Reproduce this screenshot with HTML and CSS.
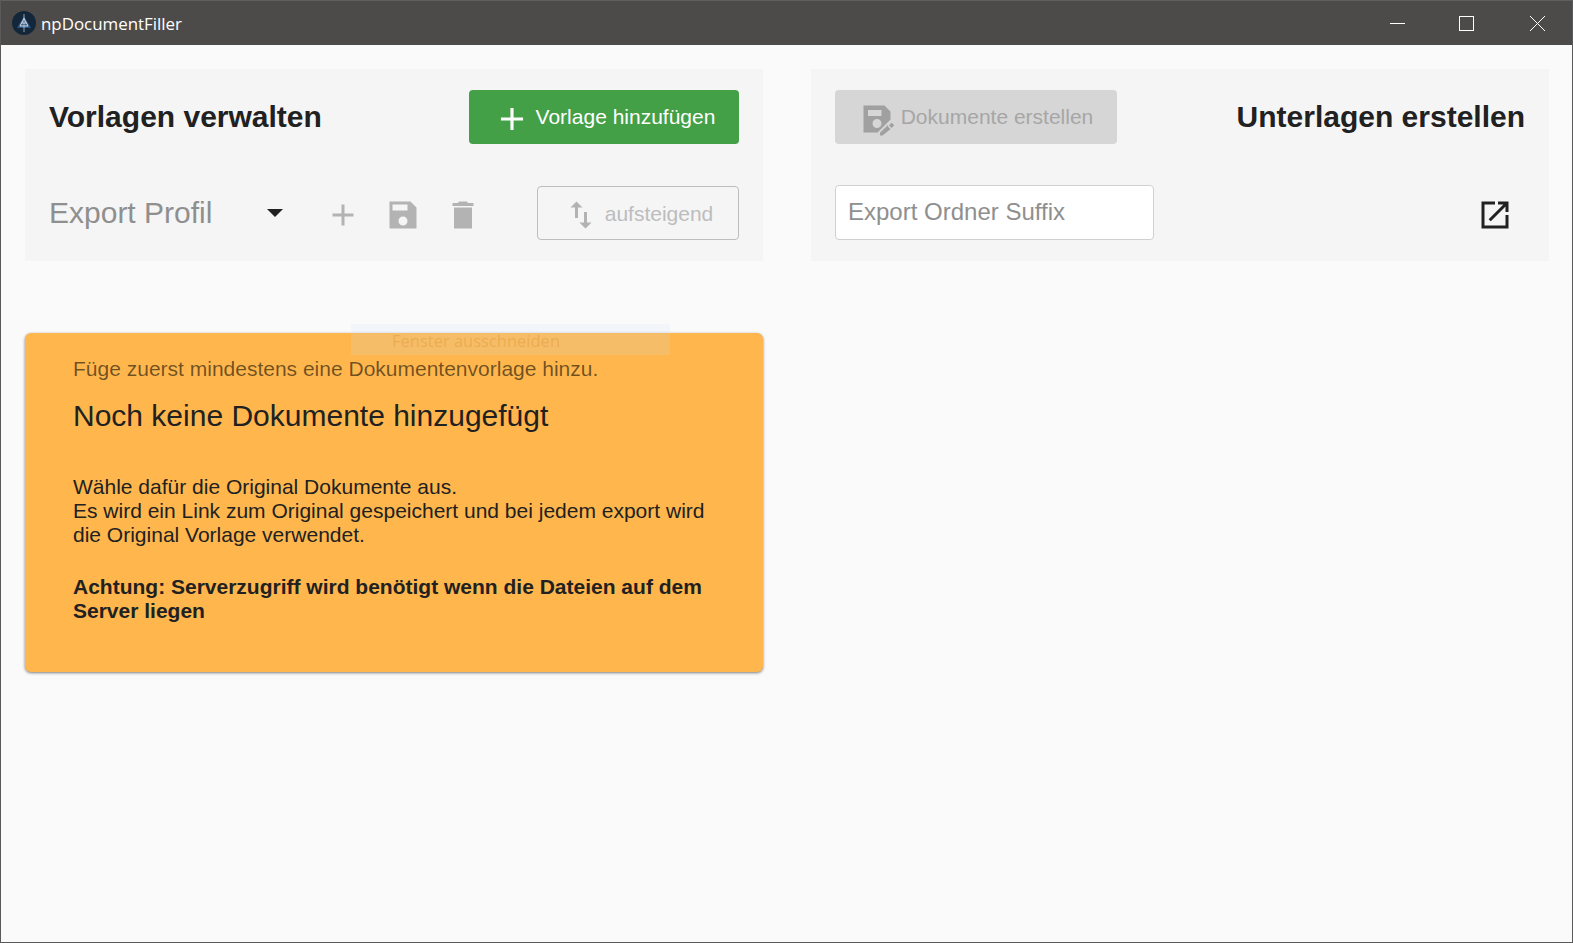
FILE: index.html
```html
<!DOCTYPE html>
<html lang="de">
<head>
    <meta charset="UTF-8">
    <title>npDocumentFiller</title>
    <link rel="stylesheet" href="styles.css">
</head>
<body>
    <div class="window">
        <header class="titlebar">
            <svg class="logo" viewBox="0 0 24 24">
                <circle cx="12" cy="12" r="12" fill="#14263a"/>
                <path d="M12 5 L19 17 L5 17 Z" fill="#2a5585"/>
                <path d="M12 7.5 L16 15 L8 15 Z M9.5 12 H14.5" fill="none" stroke="#dcdcdc" stroke-width="1"/>
                <path d="M12 3 V21" stroke="#c9d2da" stroke-width="0.7"/>
            </svg>
            <span class="app-name">npDocumentFiller</span>
            <div class="window-controls">
                <div class="control control-min">
                    <svg width="15" height="15" viewBox="0 0 15 15"><path d="M0 7.5 H15" stroke="#fff"/></svg>
                </div>
                <div class="control control-max">
                    <svg width="15" height="15" viewBox="0 0 15 15"><rect x="0.5" y="0.5" width="14" height="14" fill="none" stroke="#fff"/></svg>
                </div>
                <div class="control">
                    <svg width="15" height="15" viewBox="0 0 15 15"><path d="M0 0 L15 15 M15 0 L0 15" stroke="#fff"/></svg>
                </div>
            </div>
        </header>

        <main class="content">
            <section class="column">
                <div class="panel">
                    <div class="panel-row">
                        <h2 class="panel-title">Vorlagen verwalten</h2>
                        <button class="btn btn-green">
                            <svg class="btn-plus" viewBox="0 0 24 24"><path d="M19 13h-6v6h-2v-6H5v-2h6V5h2v6h6v2z"/></svg>
                            Vorlage hinzufügen
                        </button>
                    </div>
                    <div class="panel-row panel-row-second">
                        <div class="select">
                            <span class="select-label">Export Profil</span>
                            <span class="select-caret"></span>
                        </div>
                        <div class="icon-group">
                            <svg class="icon" viewBox="0 0 24 24"><path d="M19 13h-6v6h-2v-6H5v-2h6V5h2v6h6v2z"/></svg>
                            <svg class="icon" viewBox="0 0 24 24"><path d="M17 3H3v18h18V7l-4-4zm-5 16c-1.66 0-3-1.34-3-3s1.34-3 3-3 3 1.34 3 3-1.34 3-3 3zm3-10H5V5h10v4z"/></svg>
                            <svg class="icon" viewBox="0 0 24 24"><path d="M6 21h12V7H6v14zM19 4h-3.5l-1-1h-5l-1 1H5v2h14V4z"/></svg>
                        </div>
                        <button class="btn btn-outline">
                            <svg class="icon" viewBox="0 0 24 24"><path d="M16 17.01V10h-2v7.01h-3L15 21l4-3.99h-3zM9 3L5 6.99h3V14h2V6.99h3L9 3z"/></svg>
                            aufsteigend
                        </button>
                    </div>
                </div>

                <div class="card">
                    <p class="card-hint">Füge zuerst mindestens eine Dokumentenvorlage hinzu.</p>
                    <h3 class="card-title">Noch keine Dokumente hinzugefügt</h3>
                    <p class="card-text">Wähle dafür die Original Dokumente aus.<br>Es wird ein Link zum Original gespeichert und bei jedem export wird die Original Vorlage verwendet.</p>
                    <p class="card-text card-warning">Achtung: Serverzugriff wird benötigt wenn die Dateien auf dem Server liegen</p>
                </div>
            </section>

            <section class="column">
                <div class="panel">
                    <div class="panel-row">
                        <button class="btn btn-disabled">
                            <svg class="icon" viewBox="0 0 24 24"><path d="M21 12.4V7l-4-4H3v18h9.4l8.6-8.6zM15 15c0 1.66-1.34 3-3 3s-3-1.34-3-3 1.34-3 3-3 3 1.34 3 3zM6 6h9v4H6V6zm13.99 10.25 1.77-1.77 1.76 1.76-1.77 1.77-1.76-1.76zm-.71.71 1.76 1.76L15.76 23H14v-1.76l5.28-5.28z"/></svg>
                            Dokumente erstellen
                        </button>
                        <h2 class="panel-title">Unterlagen erstellen</h2>
                    </div>
                    <div class="panel-row panel-row-second">
                        <input class="suffix-input" type="text" placeholder="Export Ordner Suffix">
                        <svg class="icon icon-open" viewBox="0 0 24 24"><path d="M19 19H5V5h7V3H3v18h18v-9h-2v7zM14 3v2h3.59l-9.83 9.83 1.41 1.41L19 6.41V10h2V3h-7z"/></svg>
                    </div>
                </div>
            </section>
        </main>

        <!-- snipping tool hint, fading out over the window -->
        <div class="snip-hint">Fenster ausschneiden</div>
    </div>
</body>
</html>
```

FILE: styles.css
```css
* {
    box-sizing: border-box;
}

body {
    margin: 0;
    font-family: 'Liberation Sans', Arial, sans-serif;
    color: #212121;
    background-color: #fafafa;
}

.window {
    position: relative;
    height: 100vh;
    border: 1px solid #5a5a5a;
    border-top: 0;
    overflow: hidden;
}

.titlebar {
    display: flex;
    align-items: center;
    height: 45px;
    padding-left: 11px;
    background-color: #4d4b49;
    border-top: 1px solid #5f5f5f;
    color: #fff;
}

.logo {
    width: 24px;
    height: 24px;
}

.app-name {
    margin-left: 5px;
    font-family: 'Open Sans', 'Noto Sans', sans-serif;
    font-size: 16.9px;
}

.window-controls {
    display: flex;
    margin-left: auto;
    margin-right: -1px;
}

.control {
    display: flex;
    align-items: center;
    width: 70px;
    height: 44px;
    padding-left: 27px;
}

.control-min {
    width: 69px;
}

.control-max {
    width: 71px;
}

.content {
    display: grid;
    grid-template-columns: 738px 738px;
    column-gap: 48px;
    padding: 24px;
}

.panel {
    background-color: #f5f5f5;
    padding: 21px 24px;
    height: 192px;
}

.panel-row {
    display: flex;
    align-items: center;
    justify-content: space-between;
    height: 54px;
}

.panel-row-second {
    margin-top: 42px;
}

.panel-title {
    margin: 0;
    font-size: 30px;
    font-weight: 700;
}

.btn {
    display: flex;
    align-items: center;
    justify-content: center;
    height: 54px;
    border: 0;
    border-radius: 4px;
    font-family: inherit;
    font-size: 21px;
}

.btn-green {
    width: 270px;
    gap: 5px;
    background-color: #43a047;
    color: #fff;
}

.btn-plus {
    width: 38px;
    height: 38px;
    fill: #fff;
    margin-top: 4px;
}

.btn-disabled {
    width: 282px;
    gap: 6px;
    background-color: #d6d6d6;
    color: #a6a6a6;
}

.btn-disabled .icon {
    fill: #a0a0a0;
    margin-top: 4px;
}

.btn-outline {
    width: 202px;
    gap: 6px;
    padding-top: 2px;
    background: transparent;
    border: 1px solid #bdbdbd;
    color: #bdbdbd;
}

.btn-outline .icon {
    margin-top: 2px;
}

.icon {
    width: 36px;
    height: 36px;
    fill: #b3b3b3;
    flex-shrink: 0;
}

.select {
    display: flex;
    align-items: center;
    justify-content: space-between;
    width: 234px;
}

.select-label {
    font-size: 30px;
    color: #8f8f8f;
}

.select-caret {
    width: 0;
    height: 0;
    border-left: 8px solid transparent;
    border-right: 8px solid transparent;
    border-top: 8px solid #212121;
}

.icon-group {
    display: flex;
    gap: 24px;
    margin-left: 42px;
    margin-right: auto;
    margin-top: 4px;
}

.suffix-input {
    width: 319px;
    height: 55px;
    margin-top: -1px;
    padding: 0 12px 2px;
    border: 1px solid #d0d0d0;
    border-radius: 4px;
    background-color: #fff;
    font-family: inherit;
    font-size: 24px;
}

.suffix-input::placeholder {
    color: #8f8f8f;
}

.icon-open {
    fill: #212121;
    margin-right: 12px;
    margin-top: 4px;
}

.card {
    margin-top: 72px;
    height: 339px;
    padding: 23px 48px;
    background-color: #ffb74d;
    border-radius: 6px;
    box-shadow: 0 1px 3px rgba(0, 0, 0, 0.5);
}

.card-hint {
    margin: 0;
    font-size: 21px;
    line-height: 26px;
    color: rgba(0, 0, 0, 0.56);
}

.card-title {
    margin: 16px 0 0;
    font-size: 30px;
    font-weight: 400;
    line-height: 36px;
}

.card-text {
    margin: 41px 0 0;
    font-size: 21px;
    line-height: 24px;
}

.card-warning {
    margin-top: 28px;
    font-weight: 700;
}

.snip-hint {
    position: absolute;
    left: 350px;
    top: 324px;
    width: 319px;
    height: 31px;
    padding-left: 41px;
    background-color: rgba(200, 220, 245, 0.17);
    font-family: 'Open Sans', 'Noto Sans', sans-serif;
    font-size: 16.5px;
    line-height: 34px;
    color: rgba(230, 160, 60, 0.6);
}
```
